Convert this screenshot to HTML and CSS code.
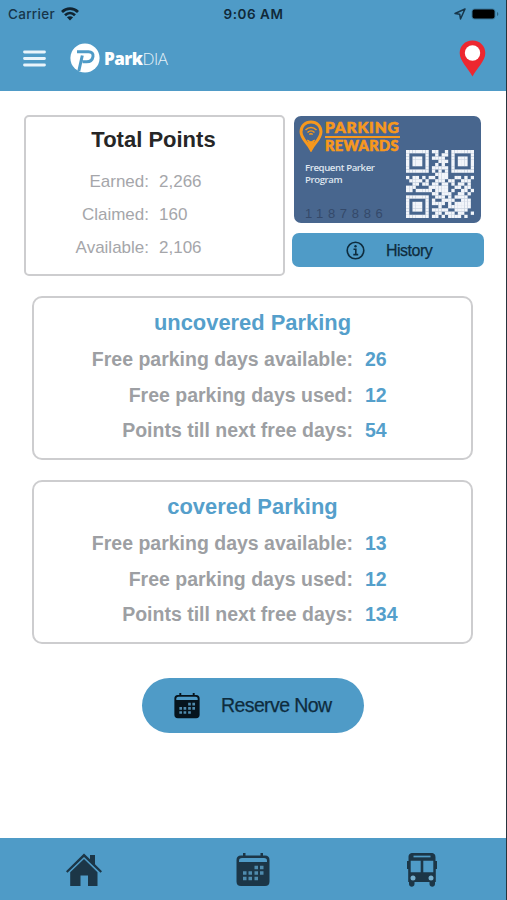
FILE: index.html
```html
<!DOCTYPE html>
<html lang="en">
<head>
<meta charset="utf-8">
<title>ParkDIA</title>
<link rel="stylesheet" href="styles.css">
</head>
<body>
<div class="app">
  <header class="header">
    <div class="status">
      <div class="status-left">Carrier
        <svg width="18" height="14" viewBox="0 0 18 14" fill="none" stroke="#102431" stroke-width="2.7"><path d="M1 5C5.500.5 12.500.5 17 5M4 8.300c3-2.900 7-2.900 10 0"/><path d="M9 13.500 5.900 10.300c1.700-1.500 4.500-1.500 6.200 0z" fill="#102431" stroke="none"/></svg>
      </div>
      <div class="status-time">9:06 AM</div>
      <div class="status-right">
        <svg width="12" height="12" viewBox="0 0 12 12" fill="none" stroke="#17364a" stroke-width="1.500" stroke-linejoin="round"><path d="M11 1 1 5.500l4.700.700L6.500 11z"/></svg>
        <svg width="28" height="12" viewBox="0 0 28 12"><rect x=".5" y=".5" width="24" height="11" rx="3.500" fill="#3c799c"/><rect x="1.500" y="1.500" width="22" height="9" rx="2" fill="#000"/><path d="M26 4c1.800.700 1.800 3.300 0 4z" fill="#2c6383"/></svg>
      </div>
    </div>
    <div class="toolbar">
      <svg class="menu" width="23" height="17" viewBox="0 0 23 17" stroke="#e9f4fb" stroke-width="2.800" stroke-linecap="round"><path d="M1.500 2h20M1.500 8.500h20M1.500 15h20"/></svg>
      <svg class="logo" width="30" height="30" viewBox="0 0 30 30"><circle cx="15" cy="15" r="14.600" fill="#fff"/><path d="M7 8.700h11.500c3.200 0 5 2 4.500 4.800-.5 3.200-2.900 5.300-6.400 5.300h-4M12.300 12.500 8.800 28" fill="none" stroke="#4f9bc7" stroke-width="3"/></svg>
      <div class="brand"><b>Park</b><span>DIA</span></div>
      <svg class="pin" width="27" height="37" viewBox="0 0 27 37"><path d="M13.500.500C6 .500.700 6 .700 13c0 8 8 14.500 12.800 23.500C18.300 27.500 26.300 21 26.300 13 26.300 6 21 .500 13.500.500z" fill="#ed2730"/><circle cx="13.500" cy="13" r="7.700" fill="#fff"/></svg>
    </div>
  </header>

  <main class="main">
    <section class="top">
      <div class="points">
        <h2>Total Points</h2>
        <dl>
          <dt>Earned:</dt><dd>2,266</dd>
          <dt>Claimed:</dt><dd>160</dd>
          <dt>Available:</dt><dd>2,106</dd>
        </dl>
      </div>
      <div class="side">
        <div class="card">
          <div class="card-info">
            <div class="rewards">
              <svg width="24" height="32" viewBox="0 0 24 32" fill="none" stroke="#f7981d"><path d="M12 1.900C6.200 1.900 2 6.200 2 11.700 2 18.500 8 22 12 29.500 16 22 22 18.500 22 11.700 22 6.200 17.800 1.900 12 1.900z" stroke-width="3"/><path d="m8.500 20 3.500 9 3.500-9-3.500 2z" fill="#f7981d" stroke-width="1"/><path d="M6.500 10c3.200-3.300 7.800-3.300 11 0M8.500 12.500c2-2 5-2 7 0M10.300 14.500c1-1 2.400-1 3.400 0" stroke-width="1.500"/></svg>
              <div class="rewards-text"><div>PARKING</div><div class="second">REWARDS</div></div>
            </div>
            <p>Frequent Parker<br>Program</p>
            <div class="number">1187886</div>
          </div>
          <svg class="qr" id="qr" width="68" height="68" viewBox="0 0 21 21"></svg>
        </div>
        <div class="history">
          <svg width="19" height="19" viewBox="0 0 19 19" fill="none" stroke="#0e2c3e" stroke-width="1.600"><circle cx="9.500" cy="9.500" r="8.300"/><path d="M7.500 8.300h2.300v5M7.300 13.600h4.900"/><circle cx="9.500" cy="5.300" r="1.200" fill="#0e2c3e" stroke="none"/></svg>
          <span>History</span>
        </div>
      </div>
    </section>

    <section class="parking">
      <h3>uncovered Parking</h3>
      <dl>
        <dt>Free parking days available:</dt><dd>26</dd>
        <dt>Free parking days used:</dt><dd>12</dd>
        <dt>Points till next free days:</dt><dd>54</dd>
      </dl>
    </section>
    <section class="parking">
      <h3>covered Parking</h3>
      <dl>
        <dt>Free parking days available:</dt><dd>13</dd>
        <dt>Free parking days used:</dt><dd>12</dd>
        <dt>Points till next free days:</dt><dd>134</dd>
      </dl>
    </section>

    <div class="reserve">
      <svg width="26" height="26" viewBox="0 0 34 34"><use href="#calendar"/></svg>
      <span>Reserve Now</span>
    </div>
  </main>

  <nav class="tabs">
    <div><svg width="36" height="34" viewBox="0 0 36 34" fill="#1c3647"><path d="M0 18.300 18 .5l6 5.800V2h5v9.200l7 7-1.500 1.600L18 4 1.500 19.800z"/><path d="M4.200 19.300 18 6l13.500 13.300V33H22V22.500h-7.500V33H4.200z"/></svg></div>
    <div><svg width="34" height="34" viewBox="0 0 34 34"><g id="calendar"><path class="cal-body" d="M7 0h2.500v2.500h15V0H27v2.500h2c3 0 4.500 1.700 4.500 4.500v21.500c0 3-1.500 4.500-4.500 4.500H5c-3 0-4.500-1.500-4.500-4.500V7c0-2.800 1.500-4.500 4.500-4.500h2z"/><path class="cal-cut" d="M6 5h22c2 0 3 1 3 2.700V9H3V7.700C3 6 4 5 6 5z"/><path class="cal-dots" d="M18.500 14.500h3.500m2 0h3.500M7 20h3.500m2 0h3.500m2.500 0h3.500m2 0h3.500M7 25.500h3.500m2 0h3.500m2.500 0h3.500"/></g></svg></div>
    <div><svg width="30" height="34" viewBox="0 0 30 34"><path d="M6 0h18c3.500 0 4.500 1.500 4.500 4.500V8H30v8h-1.200v13h-.8v2c0 3.500-5.500 3.500-5.500 0v-2h-15v2c0 3.500-5.500 3.500-5.500 0v-2h-.8V16H0V8h1.500V4.500C1.500 1.500 2.500 0 6 0z" fill="#1c3647"/><path d="M6.500 3.500h17" stroke="#4f9bc7" stroke-width="1.700"/><path d="M3.700 7.700h10v11.500h-10zM16.300 7.700h10v11.500h-10z" fill="#4f9bc7"/><circle cx="6" cy="25" r="2.500" fill="#75aecd"/><circle cx="24" cy="25" r="2.500" fill="#75aecd"/></svg></div>
  </nav>
</div>
<script src="qr.js"></script>
</body>
</html>
```
FILE: styles.css
```css
* { box-sizing: border-box; }
body { margin: 0; background: #fff; font-family: "Liberation Sans", Arial, sans-serif; }
svg { display: block; flex: none; }
h2, h3, p, dl, dd { margin: 0; }
.app { width: 507px; height: 900px; display: flex; flex-direction: column; border-right: 1px solid #26343d; overflow: hidden; }
.header { height: 91px; background: #4f9bc7; flex: none; }
.status { height: 27px; display: grid; grid-template-columns: 1fr auto 1fr; align-items: center; padding: 0 7px 0 8px; font: 500 13.500px Inter, sans-serif; color: #17364a; }
.status-left { display: flex; align-items: center; gap: 6px; letter-spacing: .3px; }
.status-time { font-weight: 600; color: #102939; letter-spacing: .55px; }
.status-right { display: flex; justify-content: flex-end; align-items: center; gap: 5px; }
.toolbar { height: 64px; display: flex; align-items: center; padding: 0 20px 2px 23px; }
.logo { margin-left: 24px; }
.brand { margin-left: 4px; font: 17px "Open Sans", sans-serif; color: #fff; display: flex; letter-spacing: -.5px; }
.brand b { font-weight: 800; }
.brand span { font-weight: 300; color: #e5f1f8; }
.pin { margin-left: auto; }
.main { flex: 1; display: flex; flex-direction: column; }
.top { display: flex; padding: 24px 22px 0 24px; gap: 7px; }
.points { width: 261px; height: 161px; border: 2px solid #cdcdcf; border-radius: 5px; padding-top: 9px; }
h2 { font-size: 22px; line-height: 28px; text-align: center; color: #262626; padding-right: 2px; }
dl { display: grid; }
.points dl { grid-template-columns: 123px 1fr; column-gap: 10px; row-gap: 0; grid-auto-rows: 33px; line-height: 33px; margin-top: 11px; font-size: 17px; color: #a5a6aa; }
dt { text-align: right; }
.side { width: 192px; }
.card { height: 107px; margin: 1px 3px 10px 2px; border-radius: 7px; background: #48668e; display: flex; position: relative; }
.card-info { padding: 4px 0 0 5px; flex: 1; }
.rewards { display: flex; gap: 2px; height: 33px; }
.rewards-text { font: 900 15.600px/15px Lato, sans-serif; color: #f7981d; width: 75px; white-space: nowrap; letter-spacing: .8px; -webkit-text-stroke: .6px #f7981d; }
.rewards-text .second { border-top: 2px solid #f7981d; margin-top: 1px; font-size: 14.500px; letter-spacing: .4px; line-height: 16px; }
.card p { font: 600 9.600px/12px "Open Sans", sans-serif; color: #dfe5ee; margin: 9px 0 0 6px; white-space: nowrap; letter-spacing: -.4px; }
.number { font: 13px/14px "Liberation Sans", sans-serif; color: #34496a; letter-spacing: 4.700px; margin: 21px 0 0 6px; }
.qr { position: absolute; right: 7px; bottom: 5px; }
.qr rect { fill: #f2f5fa; }
.history { height: 34px; border-radius: 7px; background: #4f9bc7; display: flex; align-items: center; padding-left: 54px; gap: 21px; font-size: 16px; letter-spacing: -.5px; color: #0e2c3e; -webkit-text-stroke: .25px #0e2c3e; }
.history span { padding-top: 2px; }
.parking { width: 441px; height: 164px; margin: 20px 0 0 32px; border: 2px solid #cdcdcf; border-radius: 10px; padding-top: 10px; font-weight: 700; }
.parking + .parking { margin-top: 20px; }
h3 { font-size: 21.900px; line-height: 30px; text-align: center; color: #559fcb; }
.parking dl { grid-template-columns: 319px 1fr; column-gap: 12px; grid-auto-rows: 35.500px; line-height: 35.500px; margin-top: 4px; font-size: 19.500px; color: #9d9fa3; }
.parking dd { color: #559fcb; }
.reserve { width: 222px; height: 55px; margin: 34px 0 0 142px; border-radius: 28px; background: #4f9bc7; display: flex; align-items: center; padding-left: 32px; gap: 21px; font-size: 19.500px; letter-spacing: -.6px; color: #0e2c3e; -webkit-text-stroke: .25px #0e2c3e; }
.reserve svg { color: #06141d; }
.tabs { height: 62px; background: #4f9bc7; display: grid; grid-template-columns: repeat(3, 1fr); color: #1c3647; }
.tabs div { display: flex; justify-content: center; padding-top: 15px; }
.cal-body { fill: currentColor; }
.cal-cut { fill: #4f9bc7; }
.cal-dots { fill: none; stroke: #4f8bad; stroke-width: 3.500; }
```
FILE: qr.js
```javascript
const rows = [
  "111111101100101111111",
  "100000100101101000001",
  "101110101111001011101",
  "101110100011101011101",
  "101110100101001011101",
  "100000101111101000001",
  "111111101010101111111",
  "000000000111100000000",
  "101101011011100110101",
  "011110100111011001110",
  "001101101101101011010",
  "111000011111100110110",
  "110111110111101001101",
  "000000001101110011010",
  "111111100111010111100",
  "100000101001111001110",
  "101110101111010111110",
  "101110100010011111110",
  "101110101111100111100",
  "100000100110111011001",
  "111111101101011110100"
];
const svg = document.getElementById("qr");
rows.forEach((row, y) => {
  [...row].forEach((cell, x) => {
    if (cell !== "1") return;
    const rect = document.createElementNS("http://www.w3.org/2000/svg", "rect");
    rect.setAttribute("x", x);
    rect.setAttribute("y", y);
    rect.setAttribute("width", 1.03);
    rect.setAttribute("height", 1.03);
    svg.appendChild(rect);
  });
});
```
